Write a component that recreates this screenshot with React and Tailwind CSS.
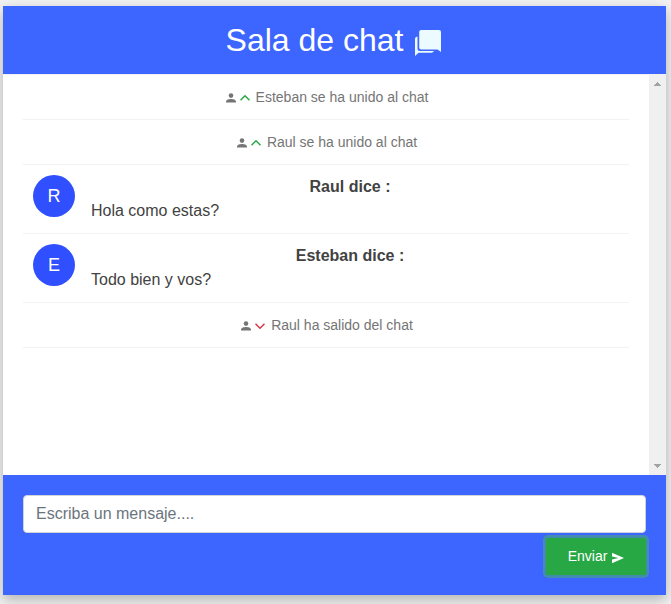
import React from "react";

const messages = [
  { type: "join", text: "Esteban se ha unido al chat" },
  { type: "join", text: "Raul se ha unido al chat" },
  { type: "message", author: "Raul", text: "Hola como estas?" },
  { type: "message", author: "Esteban", text: "Todo bien y vos?" },
  { type: "leave", text: "Raul ha salido del chat" },
];

function ChatIcon() {
  return (
    <svg viewBox="0 0 26 26" className="size-[26px] fill-[#ebfbff]" aria-hidden="true">
      <path d="M6.200 0H24a2 2 0 0 1 2 2v20l-3.500-2.500H6.200a2 2 0 0 1-2-2V2a2 2 0 0 1 2-2z" />
      <path d="M0 8.500Q.2 7 2.500 6.500V18.500Q2.500 21 5 21H19q-.8 1.800-2.500 1.800H3.500L0 26z" />
    </svg>
  );
}

function PersonIcon() {
  return (
    <svg viewBox="0 0 10 10" className="size-[10px] fill-[#757575]" aria-hidden="true">
      <circle cx="5" cy="2.600" r="2.300" />
      <path d="M0 9.500V8.500C0 6.600 3 5.900 5 5.900s5 .7 5 2.600v1z" />
    </svg>
  );
}

function Chevron({ up }) {
  return (
    <svg
      viewBox="0 0 10 10"
      className={up ? "size-[10px] fill-none stroke-[#28a745]" : "size-[10px] fill-none stroke-[#dc3545]"}
      strokeWidth="1.500"
      aria-hidden="true"
    >
      <path d={up ? "M.5 7.200 5 2.800l4.500 4.400" : "M.5 2.800 5 7.200l4.500-4.400"} />
    </svg>
  );
}

function Notice({ item }) {
  return (
    <li className="flex h-[45px] items-center justify-center gap-1 border-b border-[#f2f2f2] pl-[2px] text-sm text-[#757575]">
      <span className="flex gap-1 pt-[2px]">
        <PersonIcon />
        <Chevron up={item.type === "join"} />
      </span>
      <span className="pl-[2px]">{item.text}</span>
    </li>
  );
}

function Message({ item }) {
  return (
    <li className="flex gap-4 border-b border-[#f2f2f2] py-[10px] pr-5 pl-[10px]">
      <span className="flex size-[42px] shrink-0 items-center justify-center rounded-full bg-[#304ffe] text-lg text-white">
        {item.author[0]}
      </span>
      <div className="flex-1 text-base text-[#424242]">
        <h2 className="text-center font-bold">{item.author} dice :</h2>
        <p>{item.text}</p>
      </div>
    </li>
  );
}

export default function App() {
  return (
    <div className="bg-[#f2f2f2] pt-[6px] pr-[5px] pb-[9px] pl-[3px] font-['Liberation_Sans',Arial,sans-serif]">
      <main className="bg-white shadow-[0_5px_11px_rgba(0,0,0,0.14),0_4px_15px_rgba(0,0,0,0.14)]">
        <header className="flex h-[68px] items-center justify-center gap-3 bg-[#3d65ff] pr-[2px] text-white">
          <h1 className="text-[32px]">Sala de chat</h1>
          <span className="pt-[6px]">
            <ChatIcon />
          </span>
        </header>
        <section className="flex h-[401px] border-t border-[#f0f0f0]">
          <ul className="flex-1 px-5">
            {messages.map((item) =>
              item.type === "message" ? (
                <Message key={item.text} item={item} />
              ) : (
                <Notice key={item.text} item={item} />
              )
            )}
          </ul>
          <div className="flex w-[17px] flex-col items-center justify-between bg-[#f0f0f0] py-[7px]" aria-hidden="true">
            <svg viewBox="0 0 7 4" className="h-1 w-[7px] fill-[#a3a3a3]" shapeRendering="crispEdges">
              <path d="M0 4V3h1V2h1V1h1V0h1v1h1v1h1v1h1v1z" />
            </svg>
            <svg viewBox="0 0 7 4" className="h-1 w-[7px] fill-[#a3a3a3]" shapeRendering="crispEdges">
              <path d="M0 0v1h1v1h1v1h1v1h1V3h1V2h1V1h1V0z" />
            </svg>
          </div>
        </section>
        <form className="flex h-[120px] flex-col bg-[#3d65ff] p-5" onSubmit={(e) => e.preventDefault()}>
          <input
            type="text"
            aria-label="Mensaje"
            placeholder="Escriba un mensaje...."
            className="h-[38px] w-full rounded border border-[#ced4da] bg-white px-3 text-base text-[#495057] placeholder:text-[#6c757d]"
          />
          <button
            type="submit"
            className="mt-[5px] flex h-[38px] w-[100px] items-center justify-center gap-1 self-end rounded-xs bg-[#28a745] text-sm text-white shadow-[0_0_0_3px_rgba(72,180,97,0.5)]"
          >
            Enviar
            <span className="pt-[3px] pl-px">
              <svg viewBox="0 0 12 12" className="size-3 fill-white" aria-hidden="true">
                <path d="M0 .8 12 6 0 11.200V7.500L6.500 6 0 4.500z" />
              </svg>
            </span>
          </button>
        </form>
      </main>
    </div>
  );
}
